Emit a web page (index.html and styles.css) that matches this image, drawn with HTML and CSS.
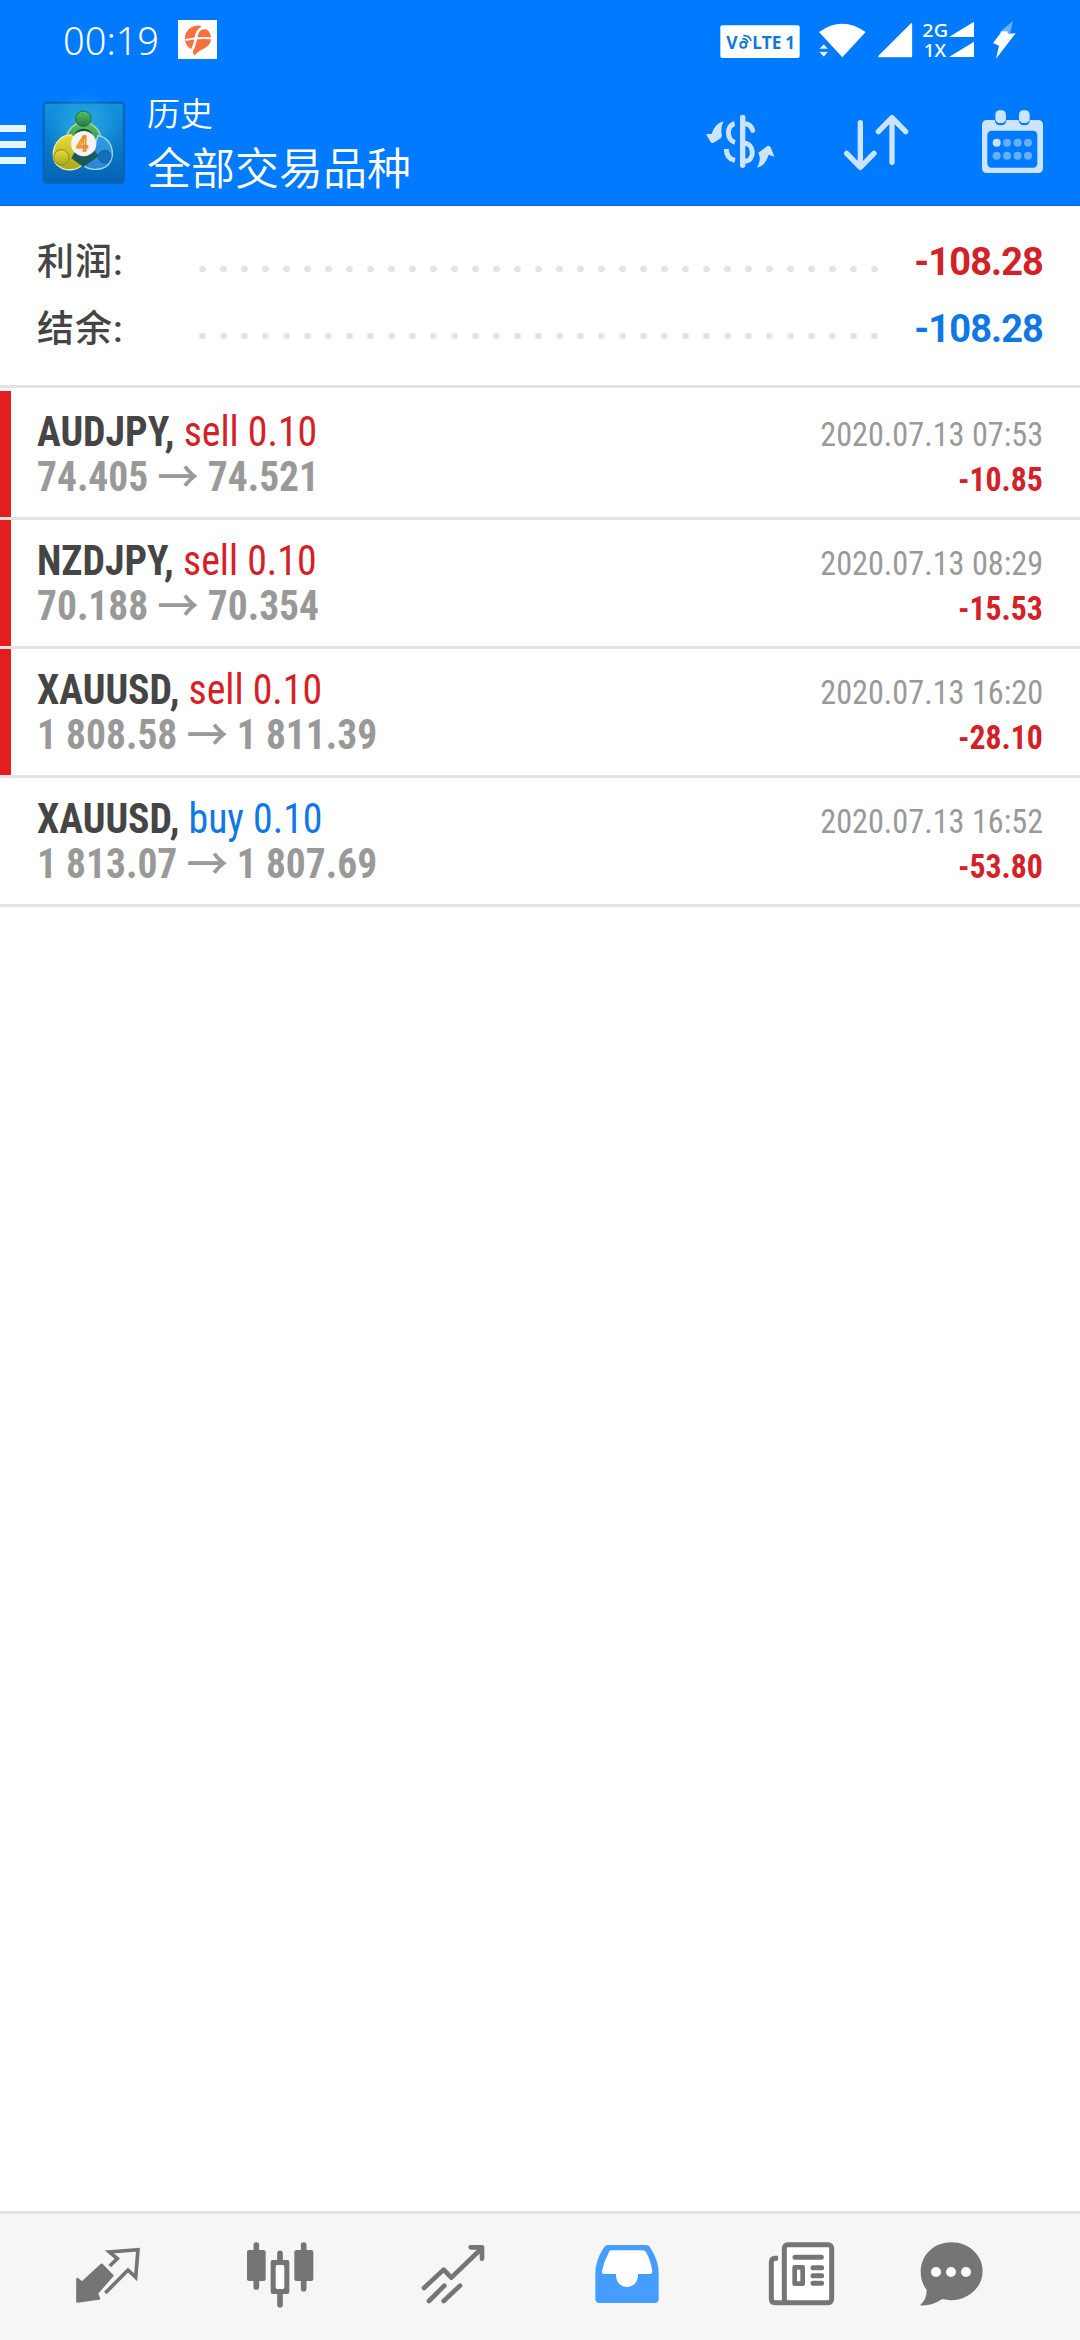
FILE: index.html
```
<!DOCTYPE html>
<html lang="zh-CN">
<head>
<meta charset="utf-8">
<title>历史</title>
<link rel="stylesheet" href="styles.css">
</head>
<body>
<div class="app">
  <header class="header">
    <div class="status">
      <span class="clock">00:19</span>
      <svg class="notice" width="39" height="39" viewBox="0 0 117 117"><rect width="117" height="117" fill="#fff"/><path d="M40 88C18 76 14 46 30 30c8-9 22-14 35-13l14 7C101 34 105 60 92 75 82 86 60 92 49 107Z" fill="#f9703e"/><path d="M86 24C62 20 56 38 53 58 50 74 46 88 36 100" fill="none" stroke="#fff" stroke-width="8"/><path d="M22 60Q56 52 101 55" fill="none" stroke="#fff" stroke-width="6"/></svg>
      <div class="signals">
        <svg width="84" height="40" viewBox="114 60 252 120"><rect x="121" y="76" width="238" height="98" rx="6" fill="#fff"/><g fill="#1278d8" class="volte"><text x="139" y="146" font-size="54" textLength="34" lengthAdjust="spacingAndGlyphs">V</text><text x="217" y="146" font-size="54" textLength="87" lengthAdjust="spacingAndGlyphs">LTE</text><text x="316" y="146" font-size="54" textLength="29" lengthAdjust="spacingAndGlyphs">1</text></g><g fill="none" stroke="#1278d8" stroke-width="6"><circle cx="190" cy="134" r="9"/><path d="M187 117q12-3 17 11M190 107q20-1 23 16" stroke-width="5"/></g></svg>
        <svg class="wifi" width="50" height="40" viewBox="411 60 150 120" fill="#fff"><path d="M417 96q70-50 140 0l-70 76Z"/><path d="M431 132l14 15h-28ZM431 171l14-16h-28Z" stroke="#007aff" stroke-width="2"/></svg>
        <svg class="cell" width="38" height="40" viewBox="588 60 114 120"><path d="M597 169 694 72V169Z" fill="#fff" stroke="#fff" stroke-width="5" stroke-linejoin="round"/></svg>
        <svg class="dual" width="53" height="40" viewBox="726 60 159 120" fill="#fff"><text x="727" y="110" font-size="52" textLength="77" lengthAdjust="spacingAndGlyphs">2G</text><text x="731" y="170" font-size="52" textLength="67" lengthAdjust="spacingAndGlyphs">1X</text><path d="M807 111 882 65V111ZM807 171 882 125V171Z"/></svg>
        <svg class="bolt" width="25" height="40" viewBox="936 60 75 120"><path d="M999 62 959 97 971 110 991 98Z" fill="#63b1ff"/><path d="M966 94 939 129 957 137 948 176 1007 100 985 101 981 94Z" fill="#fff"/></svg>
      </div>
    </div>
    <div class="bar">
      <svg class="menu" width="26" height="39" viewBox="0 0 26 39" fill="#e6f5ff"><path d="M0 0h26v7H0ZM0 16h26v7H0ZM0 32h26v7H0Z"/></svg>
      <svg class="logo" width="84" height="84" viewBox="0 0 252 252">
        <defs>
          <linearGradient id="tile" x1="0" y1="0" x2="0" y2="1"><stop offset="0" stop-color="#1294e0"/><stop offset="1" stop-color="#0562b4"/></linearGradient>
          <radialGradient id="glow"><stop offset="0" stop-color="#35b6e8" stop-opacity=".8"/><stop offset="1" stop-color="#35b6e8" stop-opacity="0"/></radialGradient>
          <linearGradient id="green" x1="0" y1="0" x2="0" y2="1"><stop offset="0" stop-color="#5fbf66"/><stop offset="1" stop-color="#1f7d40"/></linearGradient>
          <linearGradient id="gold" x1="0" y1="0" x2="0" y2="1"><stop offset="0" stop-color="#e8dc38"/><stop offset="1" stop-color="#a9a81f"/></linearGradient>
          <linearGradient id="blue" x1="0" y1="0" x2="0" y2="1"><stop offset="0" stop-color="#2f9fe0"/><stop offset="1" stop-color="#2a86d0"/></linearGradient>
        </defs>
        <rect x="5" y="5" width="241" height="241" rx="11" fill="url(#tile)" stroke="#0965b8" stroke-width="7"/>
        <circle cx="126" cy="84" r="110" fill="url(#glow)"/>
        <path d="M72 122a53 58 0 1 1 106 0l-26 30H98Z" fill="url(#green)" stroke="#b9dc9a" stroke-width="4"/>
        <path d="M88 102C36 100 18 172 48 194c22 18 56 16 74-4l-4-50Z" fill="url(#gold)" stroke="#f2eda0" stroke-width="4"/>
        <path d="M168 104c52 8 56 80 18 96-22 10-54 6-70-14l36-36Z" fill="url(#blue)" stroke="#a5d9f5" stroke-width="4"/>
        <path d="M88 172l16-30h48l18 24-46 32Z" fill="#1b5a5c"/>
        <path d="M98 96q26-26 54 0l-10 12h-34Z" fill="#14552f"/>
        <circle cx="124" cy="53" r="23" fill="url(#green)" stroke="#1c6d38" stroke-width="3"/>
        <circle cx="58" cy="169" r="23" fill="url(#gold)" stroke="#858d23" stroke-width="3"/>
        <circle cx="188" cy="167" r="19" fill="#1670b8" stroke="#125ea1" stroke-width="3"/>
        <circle cx="125" cy="128" r="38" fill="#f5f2f2"/>
        <text class="four" x="121" y="149" text-anchor="middle" font-size="62">4</text>
      </svg>
      <div class="titles"><div class="section">历史</div><div class="subject">全部交易品种</div></div>
      <div class="actions">
        <svg width="75" height="65" viewBox="69 330 225 195" fill="#cce4ff"><path d="M131 364Q120 386 126 405L124 413 100 429Q94 430 91 425L78 402 95 402Q105 369 131 364Z"/><path d="M231 503Q244 480 237 464L235 458 262 438Q268 436 272 442L283 470 266 464Q255 499 231 503Z"/><path d="M188 352V496" stroke="#cce4ff" stroke-width="16" stroke-linecap="round"/><g fill="none" stroke="#cce4ff" stroke-width="15"><path d="M164 371C139 375 139 421 165 427M139 447C139 467 148 478 165 481"/><path d="M193 371C209 371 215 379 218 391" stroke-linecap="round"/><path d="M193 430C224 431 226 483 193 484"/></g></svg>
        <svg class="sort" width="72" height="65" viewBox="480 330 216 195" fill="none" stroke="#cce4ff" stroke-width="16" stroke-linecap="round" stroke-linejoin="round"><path d="M541 368V500M500 460 541 502 582 460M636 487V355M595 395 636 353 677 395"/></svg>
        <svg class="calendar" width="65" height="65" viewBox="900 330 195 195"><path d="M922 360H944Q945 376 962 376T979 360H1016Q1017 376 1033 376T1050 360H1074Q1089 360 1089 375V504Q1089 519 1074 519H921Q906 519 906 504V375Q906 360 922 360Z" fill="#cce4ff"/><rect x="946" y="331" width="32" height="38" rx="13" fill="#cce4ff"/><rect x="1017" y="331" width="32" height="38" rx="13" fill="#cce4ff"/><rect x="922" y="392" width="150" height="111" rx="13" fill="#007aff"/><g fill="#66afff"><circle cx="950" cy="428" r="12" fill="#cce4ff"/><circle cx="981" cy="428" r="12"/><circle cx="1013" cy="428" r="12"/><circle cx="1044" cy="428" r="12"/><circle cx="950" cy="467" r="12"/><circle cx="981" cy="467" r="12"/><circle cx="1013" cy="467" r="12"/><circle cx="1044" cy="467" r="12"/></g></svg>
      </div>
    </div>
  </header>

  <section class="summary">
    <div class="total"><span class="label">利润:</span><span class="dots"></span><span class="amount loss">-108.28</span></div>
    <div class="total"><span class="label">结余:</span><span class="dots"></span><span class="amount buy">-108.28</span></div>
  </section>

  <main class="deals">
    <article class="deal marked">
      <div class="row"><div class="title"><b class="symbol">AUDJPY,</b> <span class="sell">sell 0.10</span></div><time>2020.07.13 07:53</time></div>
      <div class="row"><div class="prices">74.405 <span class="arrow">→</span> 74.521</div><b class="profit">-10.85</b></div>
    </article>
    <article class="deal marked">
      <div class="row"><div class="title"><b class="symbol">NZDJPY,</b> <span class="sell">sell 0.10</span></div><time>2020.07.13 08:29</time></div>
      <div class="row"><div class="prices">70.188 <span class="arrow">→</span> 70.354</div><b class="profit">-15.53</b></div>
    </article>
    <article class="deal marked">
      <div class="row"><div class="title"><b class="symbol">XAUUSD,</b> <span class="sell">sell 0.10</span></div><time>2020.07.13 16:20</time></div>
      <div class="row"><div class="prices">1 808.58 <span class="arrow">→</span> 1 811.39</div><b class="profit">-28.10</b></div>
    </article>
    <article class="deal">
      <div class="row"><div class="title"><b class="symbol">XAUUSD,</b> <span class="buy">buy 0.10</span></div><time>2020.07.13 16:52</time></div>
      <div class="row"><div class="prices">1 813.07 <span class="arrow">→</span> 1 807.69</div><b class="profit">-53.80</b></div>
    </article>
  </main>

  <nav class="tabs">
    <svg viewBox="42 30 210 210"><path d="M125 104 157 137 111 190 117 206 52 215V147L66 158Z" fill="#757575" stroke="#757575" stroke-width="7" stroke-linejoin="round"/><path d="M149 108 172 86 148 66 234 59 227 142 204 120 136 189" fill="none" stroke="#757575" stroke-width="11"/></svg>
    <svg viewBox="561 30 210 210" fill="#757575"><rect x="561" y="60" width="56" height="93" rx="6"/><rect x="703" y="60" width="57" height="93" rx="6"/><path d="M589 45V171M731 45V176M660 70V95M660 190V224" stroke="#757575" stroke-width="17" stroke-linecap="round"/><rect x="632" y="90" width="56" height="102" rx="6"/><rect x="647" y="105" width="26" height="72" rx="5" fill="#fff"/></svg>
    <svg viewBox="60 30 210 210" fill="none" stroke="#757575" stroke-width="14" stroke-linecap="round" stroke-linejoin="round"><path d="M72 174 131 119 154 143 246 54M212 52H246V86M87 213 133 167M131 213 180 167"/></svg>
    <svg viewBox="579 30 210 210"><path d="M625 45H737Q746 45 750 52Q776 91 776 130V206Q776 219 763 219H599Q586 219 586 206V130Q586 91 612 52Q616 45 625 45Z" fill="#459dff"/><path d="M635 61H726Q735 61 739 68Q751 89 757 123Q758 132 749 132H714C716 184 646 184 648 132H612Q604 132 606 123Q612 93 626 68Q629 61 635 61Z" fill="#fff"/></svg>
    <svg viewBox="48 30 210 210" fill="none" stroke="#757575" stroke-width="15" stroke-linejoin="round"><path d="M84 85H75Q64 85 64 97V206Q64 218 76 218H110" fill="#fff"/><rect x="103" y="44" width="142" height="174" rx="10" fill="#fff"/><path d="M135 82H214M189 113H215M189 137H215M189 160H215" stroke-linecap="round"/><rect x="134" y="112" width="24" height="49" stroke-width="14" fill="#fff"/></svg>
    <svg class="chat" viewBox="501 30 210 210"><path d="M604 37C656 37 698 75 698 124C698 181 637 223 577 207Q545 229 510 226Q531 207 530 180C488 123 523 37 604 37Z" fill="#757575"/><g fill="#fff"><circle cx="558" cy="126" r="15"/><circle cx="603" cy="126" r="15"/><circle cx="648" cy="126" r="15"/></g></svg>
  </nav>
</div>
</body>
</html>
```
FILE: styles.css
```
* { box-sizing: border-box; }
body { margin: 0; background: #fff; }
svg { display: block; flex: none; overflow: visible; }

.app {
  width: 1080px;
  height: 2340px;
  display: flex;
  flex-direction: column;
  font-family: "Roboto Condensed", Roboto, "Noto Sans CJK SC", sans-serif;
  overflow: hidden;
}

/* header */
.header { height: 206px; background: #007aff; border-bottom: 1px solid #0a6cd6; color: #fff; }
.status { display: flex; height: 82px; padding: 20px 63px 0 63px; align-items: flex-start; }
.clock { width: 115px; font: 350 38px/40px "Noto Sans", sans-serif; }
.signals { display: flex; margin-left: auto; }
.signals text { font-family: "Noto Sans", sans-serif; font-weight: 500; }
.signals .volte text { font-weight: 700; }
.wifi { margin-left: 15px; }
.cell { margin-left: 9px; }
.dual { margin-left: 8px; }
.bolt { margin-left: 17px; }
.bar { display: flex; height: 123px; padding-right: 35px; }
.menu { margin-top: 43px; }
.logo { margin: 19px 0 0 16px; }
.four { font-family: Roboto, sans-serif; font-weight: 500; fill: #fbd59c; stroke: #ee8a25; stroke-width: 4px; }
.titles { margin-left: 21px; padding-top: 8px; font-family: "Noto Sans CJK SC", sans-serif; font-weight: 350; }
.section { font-size: 33px; line-height: 44px; }
.subject { font-size: 44px; line-height: 64px; }
.actions { display: flex; margin: 28px 0 0 auto; }
.sort { margin-left: 62px; }
.calendar { margin-left: 68px; }

/* totals */
.summary { height: 182px; padding: 22px 37px 0; border-bottom: 3px solid #e3e3e3; }
.total { display: flex; height: 67px; align-items: center; }
.label { width: 155px; padding-top: 2px; color: #454545; font: 500 37px/67px Roboto, "Noto Sans CJK SC", sans-serif; letter-spacing: 1px; }
.dots { width: 690px; height: 8px; margin-top: 14px; background: radial-gradient(circle at 10.5px 4px, #e3e3e3 3px, transparent 3.7px) 0 0 / 21px 8px; }
.amount { margin-left: auto; padding-top: 2px; font: 700 38px/67px Roboto, sans-serif; letter-spacing: -0.9px; }

/* deals */
.deals { flex: 1; padding-top: 3px; }
.deal { height: 129px; padding: 18px 37px 0 26px; margin-left: 11px; border-bottom: 3px solid #e3e3e3; position: relative; }
.deal::before { content: ""; position: absolute; left: -11px; top: 0; width: 11px; height: 126px; background: #fff; }
.deal::after { content: ""; position: absolute; left: -11px; bottom: -3px; width: 11px; height: 3px; background: #e3e3e3; }
.deal.marked::before { background: #e31e1e; }
.row { display: flex; justify-content: space-between; align-items: baseline; height: 45px; line-height: 45px; font-size: 42px; white-space: nowrap; }
.title, .prices { transform: scaleX(0.947); transform-origin: left; }
.prices { transform: scaleX(0.94); }
time, .profit { transform: scaleX(0.948); transform-origin: right; font-size: 34px; }
.profit { transform: scaleX(0.935); }
.symbol { color: #454545; font-weight: 700; }
.sell, .loss, .profit { color: #d42127; }
.buy { color: #0f78e6; }
.prices { color: #999; font-weight: 700; }
.arrow { font-family: "Noto Sans CJK SC", sans-serif; font-size: 44px; font-weight: 500; line-height: 0; vertical-align: -2px; }
time { color: #999; }

/* tabs */
.tabs { display: flex; height: 129px; padding: 26px 0 0 74px; gap: 103px; background: #f6f6f6; border-top: 3px solid #e3e3e3; }
.tabs svg { width: 70px; height: 70px; }
.chat { margin-left: -22px; }
```
